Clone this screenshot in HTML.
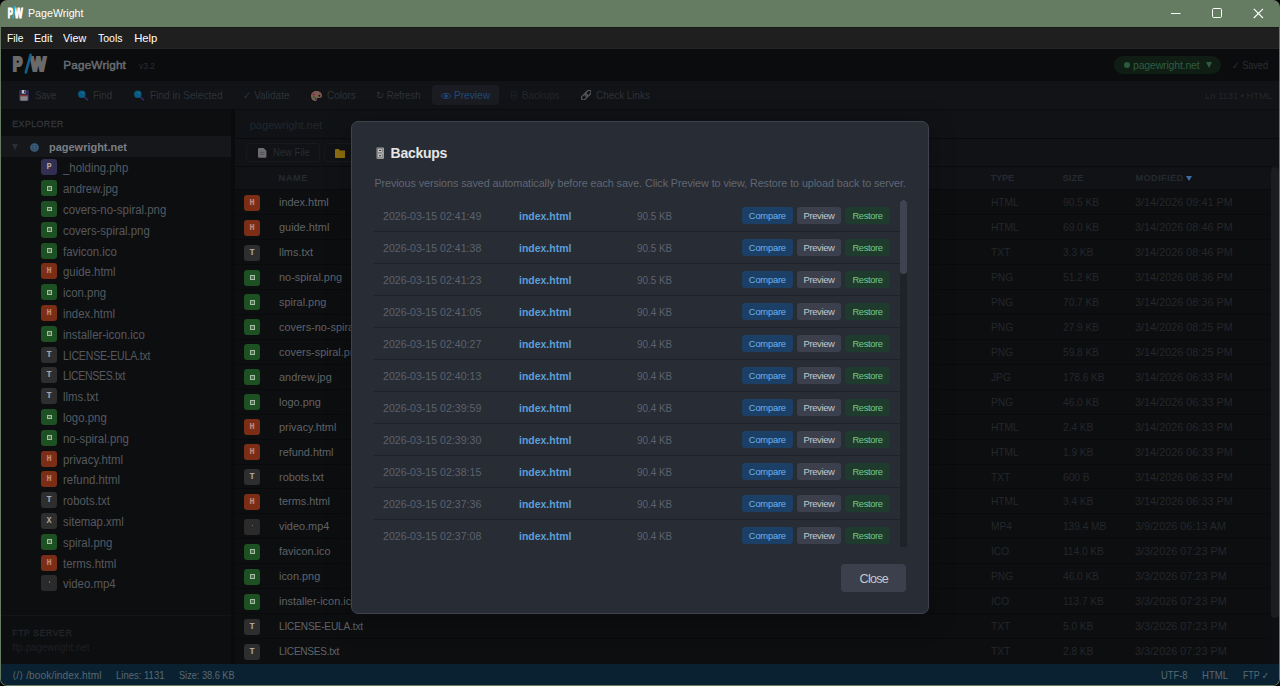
<!DOCTYPE html>
<html><head><meta charset="utf-8"><title>PageWright</title>
<style>
*{box-sizing:border-box;margin:0;padding:0}
html,body{width:1280px;height:686px;overflow:hidden;background:#000;font-family:"Liberation Sans","DejaVu Sans",sans-serif;}
body{position:relative}
span,div,b,i{white-space:nowrap}
#frame{position:absolute;left:0;top:0;width:1280px;height:686px;background:#657c62;border-radius:7px}
#title .tt{position:absolute;left:27.8px;top:0;line-height:27.5px;font-size:11.2px;color:#fff}
#win{position:absolute;left:1px;top:27px;width:1278px;height:658px;background:#0c0d0f;border-radius:0 0 6px 6px;overflow:hidden}
#menu{position:absolute;left:0;top:0;width:1278px;height:22.3px;background:#1f1f1f;box-shadow:inset 0 1px 0 #171717,inset 0 -1px 0 #242424;color:#fff;font-size:11.3px}
#menu span{position:absolute;top:0;line-height:23px}
#hdr{position:absolute;left:0;top:22px;width:1278px;height:32px;background:#0b0c0e}
#hdr .nm{position:absolute;left:62.3px;top:0;line-height:33.6px;font-size:11.8px;font-weight:normal;-webkit-text-stroke:0.45px #6a6e73;color:#6a6e73}
#hdr .ver{position:absolute;left:138px;top:0;line-height:34px;font-size:9.5px;color:#2a2d32}
#pill{position:absolute;left:1113px;top:6.5px;width:107px;height:18.5px;border-radius:10px;background:#0f1d15}
#pill .dot{position:absolute;left:9.5px;top:6.5px;width:6px;height:6px;border-radius:3px;background:#2c5a3c}
#pill .pt{position:absolute;left:19px;top:0;line-height:18.5px;font-size:10.5px;color:#2d5e3f}
#pill .ar{position:absolute;left:92px;top:6.5px;width:0;height:0;border-left:3.5px solid transparent;border-right:3.5px solid transparent;border-top:6px solid #2d5e3f}
#hdr .saved{position:absolute;left:1231px;top:0;line-height:33px;font-size:10.5px;color:#2a2d32}
#tb{position:absolute;left:0;top:54px;width:1278px;height:29px;background:#111316;box-shadow:inset 0 -1px 0 #0b0c0e}
#tb .t{position:absolute;top:0;line-height:29px;font-size:10.8px;color:#2e3237}
#tb .pv{position:absolute;left:430.6px;top:4px;width:67px;height:20px;border-radius:4px;background:#1a1c21}
#tb svg{position:absolute}
#side{position:absolute;left:0;top:83px;width:230px;height:554px;background:#0d0e10}
#side .lab{position:absolute;left:11.3px;top:7px;line-height:14px;font-size:8.8px;font-weight:normal;-webkit-text-stroke:0.3px #33363b;color:#33363b}
#side .root{position:absolute;left:0;top:26.3px;width:230px;height:20.5px;background:#15171a}
#side .root .arr{position:absolute;left:10.5px;top:7.5px;width:0;height:0;border-left:3.5px solid transparent;border-right:3.5px solid transparent;border-top:6px solid #2b2e33}
#side .root .rn{position:absolute;left:47.7px;top:0;line-height:23.6px;font-size:11.5px;font-weight:bold;color:#7b7f85}
#side .sep{position:absolute;left:0;top:505px;width:230px;height:1px;background:#131518}
#side .ftp{position:absolute;left:11.3px;top:516px;line-height:14px;font-size:8.6px;font-weight:normal;-webkit-text-stroke:0.3px #23262a;color:#23262a}
#side .ftph{position:absolute;left:11.3px;top:531px;line-height:14px;font-size:10px;color:#1d1f23}
#gap{position:absolute;left:230px;top:83px;width:4px;height:554px;background:#0a0b0c}
#main{position:absolute;left:234px;top:83px;width:1044px;height:554px;background:#0c0d0f;overflow:hidden}
#bc{position:absolute;left:0;top:0;width:1044px;height:28.5px;background:#101215;border-bottom:1px solid #090a0c}
#bc span{position:absolute;left:14.7px;top:0;line-height:30px;font-size:11.3px;color:#1f282e}
#bb{position:absolute;left:0;top:28.5px;width:1044px;height:28px;background:#101215}
#bb .btn{position:absolute;top:4px;height:19.5px;border:1px solid #17191d;border-radius:4px}
#bb .btn span{position:absolute;top:0;line-height:17.5px;font-size:10.8px;color:#292c31}
#th{position:absolute;left:0;top:56px;width:1036px;height:23.5px;background:#101215;border-top:1px solid #0a0b0d}
#th span{position:absolute;top:0;line-height:22px;font-size:9.3px;font-weight:bold;color:#252a31}
#vs{position:absolute;left:1036px;top:56.5px;width:8px;height:498px;background:#0e0f12}
#vs i{position:absolute;left:0;top:0;width:7.5px;height:451px;background:#1a1c20;border-radius:4px}
#status{position:absolute;left:0;top:637px;width:1278px;height:21px;background:#0a2131;color:#596872;font-size:10.1px}
#status span{position:absolute;top:0;line-height:24.4px}
.fi{position:absolute;width:16px;height:16px;border-radius:3px;font-family:"Liberation Mono",monospace;font-weight:bold;font-size:8.6px;line-height:16px;text-align:center;color:#a9a9a9}
.ip{background:#322f52;color:#b0aa9c}.ii{background:#1d5022}.ih{background:#7c2d15;color:#bd8e7c}.it{background:#2e2e2e;color:#a8a8a8}.id{background:#2b2b2b}
.fi .sq{position:absolute;left:5.6px;top:5.6px;width:5px;height:4.8px;border:1.2px solid #a4bba4;background:#44704a}
.fi .dot{position:absolute;left:7.5px;top:6px;width:1.5px;height:1.5px;background:#6a6a6a}
.sf{position:absolute;left:0;width:230px;height:16px}
.sf .fi{left:40px;top:0}
.sf .sn{position:absolute;left:61.6px;top:0;line-height:18.6px;font-size:12px;color:#55595f}
.mr{position:absolute;left:0;width:1036px;height:25px;border-top:1px solid #090a0c;background:#0d0e10}
.mr .fi{left:9px;top:4.5px}
.mr .mn,.mr .mt,.mr .ms,.mr .md{position:absolute;top:0;line-height:24.8px;font-size:11.6px}
.mr .mn{left:43.5px;color:#5f6368;font-size:11.5px;line-height:24.2px}
.mr .mt{left:755.5px;color:#24272c}
.mr .ms{left:827.5px;color:#24272c}
.mr .md{left:900px;color:#24272c}
#modal{position:absolute;left:351px;top:121px;width:578px;height:493px;background:#282c34;border:1px solid #3d424e;border-radius:7px;box-shadow:0 6px 28px rgba(0,0,0,.3)}
#modal h2{position:absolute;left:38.6px;top:20px;line-height:22px;font-size:14px;color:#e6e6e6;font-weight:bold}
#modal .desc{position:absolute;left:22.4px;top:53px;line-height:16px;font-size:10.8px;color:#606774}
#list{position:absolute;left:22px;top:77.5px;width:525.5px;height:347px;overflow:hidden}
#sb{position:absolute;left:547.5px;top:77.5px;width:7px;height:347px;background:#1f2228}
#sb i{position:absolute;left:0;top:0;width:7px;height:74.5px;border-radius:3.5px;background:#3e4350}
.br{position:absolute;left:0;width:525.5px;height:32px;border-bottom:1px solid #1e2127}
.br span{position:absolute}
.bd,.bf,.bs{top:0;line-height:32.5px;font-size:11.2px}
.bd{left:9.1px;color:#5c626e}
.bf{left:144.8px;color:#5b9fd9;font-weight:bold}
.bs{left:263px;color:#5c626e}
.bb{top:7px;height:17px;border-radius:3px;font-size:9.4px;line-height:17px;text-align:center}
.bb b{font-weight:normal}
.bc{left:367.7px;width:51.3px;background:#1c3f66;color:#6fb1ea}
.bp{left:423px;width:44px;background:#3b404c;color:#c5c8cf}
.bx{left:471px;width:45px;background:#1f3b2d;color:#73c98a}
#close{position:absolute;left:489.2px;top:441.8px;width:65.2px;height:28px;background:#3b404c;border-radius:4px;color:#c5c8d0;font-size:12.6px;line-height:30px;text-align:center}
</style></head><body>
<div id="frame"></div>
<div id="title">
 <svg style="position:absolute;left:7px;top:5px" width="18" height="15" viewBox="0 0 18 15"><g font-family="Liberation Sans, sans-serif" font-weight="bold" font-size="14.5" fill="#fff" stroke="#fff" stroke-width="1.1"><text transform="translate(0.7,12.6) scale(0.55,1)">P</text><text transform="translate(7.6,12.6) scale(0.6,1)">W</text></g><line x1="8.2" y1="1" x2="5.8" y2="13.5" stroke="#1fb0f0" stroke-width="1.4"/></svg>
 <span class="tt" style="transform:scaleX(0.9528);transform-origin:0 50%">PageWright</span>
 <svg style="position:absolute;left:1165px;top:5px" width="110" height="18" viewBox="0 0 110 18" fill="none" stroke="#fff" stroke-width="1"><path d="M6 8.5h9.5"/><rect x="47.5" y="3.5" width="9" height="9" rx="1.2"/><path d="M88.8 3.8l9.2 9.2M98 3.8l-9.2 9.2" stroke-width="1.1"/></svg>
</div>
<div id="win">
 <div id="menu"><span style="transform:scaleX(0.9064);transform-origin:0 50%;left:5.5px">File</span><span style="transform:scaleX(0.9451);transform-origin:0 50%;left:32.6px">Edit</span><span style="transform:scaleX(0.9549);transform-origin:0 50%;left:62.3px">View</span><span style="transform:scaleX(0.9289);transform-origin:0 50%;left:97px">Tools</span><span style="letter-spacing:-0.059px;left:133.2px">Help</span></div>
 <div id="hdr">
  <svg style="position:absolute;left:10px;top:3.7px" width="40" height="22" viewBox="0 0 40 22"><g font-family="Liberation Sans, sans-serif" font-weight="bold" font-size="19.6" fill="#6a6a6a" stroke="#6a6a6a" stroke-width="2.2" stroke-linejoin="miter"><text transform="translate(1.7,18.3) scale(0.74,1)">P</text><text transform="translate(19.6,18.3) scale(0.84,1)">W</text></g><line x1="19.6" y1="1.8" x2="14.8" y2="19.4" stroke="#14608a" stroke-width="2.6" stroke-linecap="round"/></svg>
  <span class="nm" style="letter-spacing:0.128px">PageWright</span><span class="ver" style="transform:scaleX(0.8904);transform-origin:0 50%">v3.2</span>
  <div id="pill"><i class="dot"></i><span class="pt" style="letter-spacing:-0.171px">pagewright.net</span><i class="ar"></i></div>
  <span class="saved" style="letter-spacing:-0.084px;transform:scaleX(0.8800);transform-origin:0 50%">✓ Saved</span>
 </div>
 <div id="tb">
  <div class="pv"></div>
  <svg style="left:18.3px;top:8.9px" width="10" height="10.7" viewBox="0 0 10 10.7"><rect width="10" height="10.7" rx="1.2" fill="#2e2a52"/><rect x="2.8" y="0" width="3.6" height="3.6" fill="#bfc0c6"/><rect x="5" y="0.5" width="1" height="2.4" fill="#2e2a52"/><rect x="1.3" y="5.1" width="7.4" height="5.6" fill="#858587"/><rect x="1.3" y="5.1" width="7.4" height="1.2" fill="#8a2a20"/></svg>
  <svg style="left:76px;top:8px" width="13" height="13" viewBox="0 0 13 13"><line x1="7.5" y1="8" x2="10.2" y2="10.7" stroke="#30295a" stroke-width="1.9" stroke-linecap="round"/><circle cx="4.8" cy="5.3" r="3.7" fill="#0b5a82"/><circle cx="5.9" cy="3.7" r="0.7" fill="#2f7aa0"/></svg>
  <svg style="left:132.2px;top:8px" width="13" height="13" viewBox="0 0 13 13"><line x1="7.5" y1="8" x2="10.2" y2="10.7" stroke="#30295a" stroke-width="1.9" stroke-linecap="round"/><circle cx="4.8" cy="5.3" r="3.7" fill="#0b5a82"/><circle cx="5.9" cy="3.7" r="0.7" fill="#2f7aa0"/></svg>
  <svg style="left:309.9px;top:9.6px" width="11" height="10" viewBox="0 0 11 10"><path d="M5.2 0C2.2 0 0 2.2 0 5.2 0 8 2 10 4.6 10c1 0 1.4-.6 1.2-1.4-.2-.9.3-1.5 1.3-1.5h1.6C10.2 7.1 11 6 11 4.6 11 2 8.5 0 5.2 0z" fill="#7f5d4b"/><circle cx="2.6" cy="3.4" r="1" fill="#a0105a"/><circle cx="2.8" cy="6" r="1" fill="#0a7a2a"/><circle cx="4.6" cy="7.7" r="0.9" fill="#2030a0"/><circle cx="4.8" cy="2.1" r="0.9" fill="#6a50a0"/><circle cx="8.4" cy="4.7" r="1" fill="#111316"/></svg>
  <svg style="left:440.1px;top:11.5px" width="10" height="6" viewBox="0 0 10 6"><ellipse cx="5" cy="3" rx="4.5" ry="2.4" fill="none" stroke="#1f4878" stroke-width="1"/><ellipse cx="5" cy="3" rx="2" ry="1.5" fill="#1f4878"/></svg>
  <svg style="left:510px;top:9.9px" width="6" height="8.7" viewBox="0 0 6 8.7" fill="none" stroke="#1d2024" stroke-width="0.9"><rect x="0.5" y="0.5" width="5" height="7.7" rx="0.6"/><path d="M0.5 4.3h5M2.2 2.4h1.6M2.2 6.2h1.6"/></svg>
  <svg style="left:579.6px;top:9px" width="10.6" height="10.2" viewBox="0 0 10.6 10.2" fill="none" stroke="#585858" stroke-width="1.3"><g transform="translate(5.3,5.1) rotate(-45)"><rect x="-6" y="-2.1" width="7" height="4.2" rx="2.1"/><rect x="-1" y="-2.1" width="7" height="4.2" rx="2.1"/></g></svg>
  <span class="t" style="letter-spacing:-0.186px;transform:scaleX(0.8800);transform-origin:0 50%;left:34px">Save</span>
  <span class="t" style="transform:scaleX(0.9136);transform-origin:0 50%;left:92.4px">Find</span>
  <span class="t" style="transform:scaleX(0.9375);transform-origin:0 50%;left:148.6px">Find in Selected</span>
  <span class="t" style="transform:scaleX(0.9251);transform-origin:0 50%;left:241.7px">✓ Validate</span>
  <span class="t" style="transform:scaleX(0.9230);transform-origin:0 50%;left:326px">Colors</span>
  <span class="t" style="transform:scaleX(0.8945);transform-origin:0 50%;left:375px">↻ Refresh</span>
  <span class="t" style="transform:scaleX(0.9373);transform-origin:0 50%;left:453.3px;color:#1f4a78">Preview</span>
  <span class="t" style="transform:scaleX(0.9053);transform-origin:0 50%;left:521px;color:#23262b">Backups</span>
  <span class="t" style="transform:scaleX(0.9182);transform-origin:0 50%;left:595px">Check Links</span>
  <span class="t" style="transform:scaleX(0.9539);transform-origin:0 50%;left:1204px;color:#24272c;font-size:9.8px">Ln 1131 • HTML</span>
 </div>
 <div id="side">
  <span class="lab" style="letter-spacing:0.447px">EXPLORER</span>
  <div class="root"><i class="arr"></i><svg style="position:absolute;left:29px;top:6.5px" width="9" height="9" viewBox="0 0 9 9"><circle cx="4.5" cy="4.5" r="4.3" fill="#3f6585"/><path d="M0.5 4.5h8M1.2 2.6h6.6M1.2 6.4h6.6" stroke="#2a4660" stroke-width="0.7" fill="none"/><ellipse cx="4.5" cy="4.5" rx="2" ry="4.2" fill="none" stroke="#2a4660" stroke-width="0.7"/></svg><span class="rn" style="transform:scaleX(0.9538);transform-origin:0 50%">pagewright.net</span></div>
<div class="sf" style="top:49.4px"><span class="fi ip">P</span><span class="sn" style="transform:scaleX(0.9500);transform-origin:0 50%">_holding.php</span></div>
<div class="sf" style="top:70.2px"><span class="fi ii"><i class="sq"></i></span><span class="sn" style="transform:scaleX(0.9500);transform-origin:0 50%">andrew.jpg</span></div>
<div class="sf" style="top:91.0px"><span class="fi ii"><i class="sq"></i></span><span class="sn" style="transform:scaleX(0.9500);transform-origin:0 50%">covers-no-spiral.png</span></div>
<div class="sf" style="top:111.8px"><span class="fi ii"><i class="sq"></i></span><span class="sn" style="transform:scaleX(0.9500);transform-origin:0 50%">covers-spiral.png</span></div>
<div class="sf" style="top:132.6px"><span class="fi ii"><i class="sq"></i></span><span class="sn" style="transform:scaleX(0.9500);transform-origin:0 50%">favicon.ico</span></div>
<div class="sf" style="top:153.4px"><span class="fi ih">H</span><span class="sn" style="transform:scaleX(0.9500);transform-origin:0 50%">guide.html</span></div>
<div class="sf" style="top:174.2px"><span class="fi ii"><i class="sq"></i></span><span class="sn" style="transform:scaleX(0.9500);transform-origin:0 50%">icon.png</span></div>
<div class="sf" style="top:195.0px"><span class="fi ih">H</span><span class="sn" style="transform:scaleX(0.9500);transform-origin:0 50%">index.html</span></div>
<div class="sf" style="top:215.8px"><span class="fi ii"><i class="sq"></i></span><span class="sn" style="transform:scaleX(0.9500);transform-origin:0 50%">installer-icon.ico</span></div>
<div class="sf" style="top:236.6px"><span class="fi it">T</span><span class="sn" style="letter-spacing:-0.219px;transform:scaleX(0.8800);transform-origin:0 50%">LICENSE-EULA.txt</span></div>
<div class="sf" style="top:257.4px"><span class="fi it">T</span><span class="sn" style="letter-spacing:-0.409px;transform:scaleX(0.8800);transform-origin:0 50%">LICENSES.txt</span></div>
<div class="sf" style="top:278.2px"><span class="fi it">T</span><span class="sn" style="transform:scaleX(0.9500);transform-origin:0 50%">llms.txt</span></div>
<div class="sf" style="top:299.0px"><span class="fi ii"><i class="sq"></i></span><span class="sn" style="transform:scaleX(0.9500);transform-origin:0 50%">logo.png</span></div>
<div class="sf" style="top:319.8px"><span class="fi ii"><i class="sq"></i></span><span class="sn" style="transform:scaleX(0.9500);transform-origin:0 50%">no-spiral.png</span></div>
<div class="sf" style="top:340.6px"><span class="fi ih">H</span><span class="sn" style="transform:scaleX(0.9500);transform-origin:0 50%">privacy.html</span></div>
<div class="sf" style="top:361.4px"><span class="fi ih">H</span><span class="sn" style="transform:scaleX(0.9500);transform-origin:0 50%">refund.html</span></div>
<div class="sf" style="top:382.2px"><span class="fi it">T</span><span class="sn" style="transform:scaleX(0.9500);transform-origin:0 50%">robots.txt</span></div>
<div class="sf" style="top:403.0px"><span class="fi it">X</span><span class="sn" style="transform:scaleX(0.9500);transform-origin:0 50%">sitemap.xml</span></div>
<div class="sf" style="top:423.8px"><span class="fi ii"><i class="sq"></i></span><span class="sn" style="transform:scaleX(0.9500);transform-origin:0 50%">spiral.png</span></div>
<div class="sf" style="top:444.6px"><span class="fi ih">H</span><span class="sn" style="transform:scaleX(0.9500);transform-origin:0 50%">terms.html</span></div>
<div class="sf" style="top:465.4px"><span class="fi id"><i class="dot"></i></span><span class="sn" style="transform:scaleX(0.9500);transform-origin:0 50%">video.mp4</span></div>
  <div class="sep"></div>
  <span class="ftp" style="letter-spacing:0.634px">FTP SERVER</span>
  <span class="ftph" style="letter-spacing:-0.139px">ftp.pagewright.net</span>
 </div>
 <div id="gap"></div>
 <div id="main">
  <div id="bc"><span style="letter-spacing:-0.136px">pagewright.net</span></div>
  <div id="bb">
   <div class="btn" style="left:11.4px;width:73.4px"><svg style="position:absolute;left:10.9px;top:4.6px" width="8.4" height="9.7" viewBox="0 0 8.4 9.7"><path d="M1 0h4.6l2.8 2.8V8.7a1 1 0 0 1-1 1H1a1 1 0 0 1-1-1V1a1 1 0 0 1 1-1z" fill="#6e6c70"/><path d="M1.8 4.4h4.6M1.8 6.4h4.6" stroke="#504e52" stroke-width="0.8"/></svg><span style="letter-spacing:-0.023px;transform:scaleX(0.8800);transform-origin:0 50%;left:25.4px">New File</span></div>
   <div class="btn" style="left:88.9px;width:90px"><svg style="position:absolute;left:9.8px;top:5.3px" width="10.3" height="9" viewBox="0 0 10.3 9"><path d="M0 1a1 1 0 0 1 1-1h2.8l1.2 1.4h4.3a1 1 0 0 1 1 1V8a1 1 0 0 1-1 1H1a1 1 0 0 1-1-1z" fill="#8f6f10"/></svg></div>
  </div>
  <div id="th"><span style="letter-spacing:0.531px;left:43.5px">NAME</span><span style="letter-spacing:-0.199px;left:755.5px">TYPE</span><span style="letter-spacing:0.082px;left:827.5px">SIZE</span><span style="letter-spacing:0.318px;left:900.5px">MODIFIED</span><i style="position:absolute;left:951px;top:8.5px;width:0;height:0;border-left:3.6px solid transparent;border-right:3.6px solid transparent;border-top:5px solid #3a6ea5"></i></div>
<div class="mr" style="top:79.20px"><span class="fi ih">H</span><span class="mn" style="transform:scaleX(0.9480);transform-origin:0 50%">index.html</span><span class="mt" style="letter-spacing:-0.018px;transform:scaleX(0.8800);transform-origin:0 50%">HTML</span><span class="ms" style="letter-spacing:-0.054px;transform:scaleX(0.8800);transform-origin:0 50%">90.5 KB</span><span class="md" style="transform:scaleX(0.9360);transform-origin:0 50%">3/14/2026 09:41 PM</span></div>
<div class="mr" style="top:104.14px"><span class="fi ih">H</span><span class="mn" style="transform:scaleX(0.9480);transform-origin:0 50%">guide.html</span><span class="mt" style="letter-spacing:-0.018px;transform:scaleX(0.8800);transform-origin:0 50%">HTML</span><span class="ms" style="letter-spacing:-0.054px;transform:scaleX(0.8800);transform-origin:0 50%">69.0 KB</span><span class="md" style="transform:scaleX(0.9360);transform-origin:0 50%">3/14/2026 08:46 PM</span></div>
<div class="mr" style="top:129.08px"><span class="fi it">T</span><span class="mn" style="transform:scaleX(0.9480);transform-origin:0 50%">llms.txt</span><span class="mt" style="letter-spacing:-0.017px;transform:scaleX(0.8800);transform-origin:0 50%">TXT</span><span class="ms" style="letter-spacing:-0.053px;transform:scaleX(0.8800);transform-origin:0 50%">3.3 KB</span><span class="md" style="transform:scaleX(0.9360);transform-origin:0 50%">3/14/2026 08:46 PM</span></div>
<div class="mr" style="top:154.02px"><span class="fi ii"><i class="sq"></i></span><span class="mn" style="transform:scaleX(0.9480);transform-origin:0 50%">no-spiral.png</span><span class="mt" style="letter-spacing:-0.019px;transform:scaleX(0.8800);transform-origin:0 50%">PNG</span><span class="ms" style="letter-spacing:-0.054px;transform:scaleX(0.8800);transform-origin:0 50%">51.2 KB</span><span class="md" style="transform:scaleX(0.9360);transform-origin:0 50%">3/14/2026 08:36 PM</span></div>
<div class="mr" style="top:178.96px"><span class="fi ii"><i class="sq"></i></span><span class="mn" style="transform:scaleX(0.9480);transform-origin:0 50%">spiral.png</span><span class="mt" style="letter-spacing:-0.019px;transform:scaleX(0.8800);transform-origin:0 50%">PNG</span><span class="ms" style="letter-spacing:-0.054px;transform:scaleX(0.8800);transform-origin:0 50%">70.7 KB</span><span class="md" style="transform:scaleX(0.9360);transform-origin:0 50%">3/14/2026 08:36 PM</span></div>
<div class="mr" style="top:203.90px"><span class="fi ii"><i class="sq"></i></span><span class="mn" style="transform:scaleX(0.9480);transform-origin:0 50%">covers-no-spiral.png</span><span class="mt" style="letter-spacing:-0.019px;transform:scaleX(0.8800);transform-origin:0 50%">PNG</span><span class="ms" style="letter-spacing:-0.054px;transform:scaleX(0.8800);transform-origin:0 50%">27.9 KB</span><span class="md" style="transform:scaleX(0.9360);transform-origin:0 50%">3/14/2026 08:25 PM</span></div>
<div class="mr" style="top:228.84px"><span class="fi ii"><i class="sq"></i></span><span class="mn" style="transform:scaleX(0.9480);transform-origin:0 50%">covers-spiral.png</span><span class="mt" style="letter-spacing:-0.019px;transform:scaleX(0.8800);transform-origin:0 50%">PNG</span><span class="ms" style="letter-spacing:-0.054px;transform:scaleX(0.8800);transform-origin:0 50%">59.8 KB</span><span class="md" style="transform:scaleX(0.9360);transform-origin:0 50%">3/14/2026 08:25 PM</span></div>
<div class="mr" style="top:253.78px"><span class="fi ii"><i class="sq"></i></span><span class="mn" style="transform:scaleX(0.9480);transform-origin:0 50%">andrew.jpg</span><span class="mt" style="letter-spacing:-0.017px;transform:scaleX(0.8800);transform-origin:0 50%">JPG</span><span class="ms" style="letter-spacing:-0.054px;transform:scaleX(0.8800);transform-origin:0 50%">178.6 KB</span><span class="md" style="transform:scaleX(0.9360);transform-origin:0 50%">3/14/2026 06:33 PM</span></div>
<div class="mr" style="top:278.72px"><span class="fi ii"><i class="sq"></i></span><span class="mn" style="transform:scaleX(0.9480);transform-origin:0 50%">logo.png</span><span class="mt" style="letter-spacing:-0.019px;transform:scaleX(0.8800);transform-origin:0 50%">PNG</span><span class="ms" style="letter-spacing:-0.054px;transform:scaleX(0.8800);transform-origin:0 50%">46.0 KB</span><span class="md" style="transform:scaleX(0.9360);transform-origin:0 50%">3/14/2026 06:33 PM</span></div>
<div class="mr" style="top:303.66px"><span class="fi ih">H</span><span class="mn" style="transform:scaleX(0.9480);transform-origin:0 50%">privacy.html</span><span class="mt" style="letter-spacing:-0.018px;transform:scaleX(0.8800);transform-origin:0 50%">HTML</span><span class="ms" style="letter-spacing:-0.053px;transform:scaleX(0.8800);transform-origin:0 50%">2.4 KB</span><span class="md" style="transform:scaleX(0.9360);transform-origin:0 50%">3/14/2026 06:33 PM</span></div>
<div class="mr" style="top:328.60px"><span class="fi ih">H</span><span class="mn" style="transform:scaleX(0.9480);transform-origin:0 50%">refund.html</span><span class="mt" style="letter-spacing:-0.018px;transform:scaleX(0.8800);transform-origin:0 50%">HTML</span><span class="ms" style="letter-spacing:-0.053px;transform:scaleX(0.8800);transform-origin:0 50%">1.9 KB</span><span class="md" style="transform:scaleX(0.9360);transform-origin:0 50%">3/14/2026 06:33 PM</span></div>
<div class="mr" style="top:353.54px"><span class="fi it">T</span><span class="mn" style="transform:scaleX(0.9480);transform-origin:0 50%">robots.txt</span><span class="mt" style="letter-spacing:-0.017px;transform:scaleX(0.8800);transform-origin:0 50%">TXT</span><span class="ms" style="letter-spacing:-0.055px;transform:scaleX(0.8800);transform-origin:0 50%">600 B</span><span class="md" style="transform:scaleX(0.9360);transform-origin:0 50%">3/14/2026 06:33 PM</span></div>
<div class="mr" style="top:378.48px"><span class="fi ih">H</span><span class="mn" style="transform:scaleX(0.9480);transform-origin:0 50%">terms.html</span><span class="mt" style="letter-spacing:-0.018px;transform:scaleX(0.8800);transform-origin:0 50%">HTML</span><span class="ms" style="letter-spacing:-0.053px;transform:scaleX(0.8800);transform-origin:0 50%">3.4 KB</span><span class="md" style="transform:scaleX(0.9360);transform-origin:0 50%">3/14/2026 06:33 PM</span></div>
<div class="mr" style="top:403.42px"><span class="fi id"><i class="dot"></i></span><span class="mn" style="transform:scaleX(0.9480);transform-origin:0 50%">video.mp4</span><span class="mt" style="letter-spacing:-0.018px;transform:scaleX(0.8800);transform-origin:0 50%">MP4</span><span class="ms" style="letter-spacing:-0.056px;transform:scaleX(0.8800);transform-origin:0 50%">139.4 MB</span><span class="md" style="transform:scaleX(0.9360);transform-origin:0 50%">3/9/2026 06:13 AM</span></div>
<div class="mr" style="top:428.36px"><span class="fi ii"><i class="sq"></i></span><span class="mn" style="transform:scaleX(0.9480);transform-origin:0 50%">favicon.ico</span><span class="mt" style="letter-spacing:-0.016px;transform:scaleX(0.8800);transform-origin:0 50%">ICO</span><span class="ms" style="letter-spacing:-0.053px;transform:scaleX(0.8800);transform-origin:0 50%">114.0 KB</span><span class="md" style="transform:scaleX(0.9360);transform-origin:0 50%">3/3/2026 07:23 PM</span></div>
<div class="mr" style="top:453.30px"><span class="fi ii"><i class="sq"></i></span><span class="mn" style="transform:scaleX(0.9480);transform-origin:0 50%">icon.png</span><span class="mt" style="letter-spacing:-0.019px;transform:scaleX(0.8800);transform-origin:0 50%">PNG</span><span class="ms" style="letter-spacing:-0.054px;transform:scaleX(0.8800);transform-origin:0 50%">46.0 KB</span><span class="md" style="transform:scaleX(0.9360);transform-origin:0 50%">3/3/2026 07:23 PM</span></div>
<div class="mr" style="top:478.24px"><span class="fi ii"><i class="sq"></i></span><span class="mn" style="transform:scaleX(0.9480);transform-origin:0 50%">installer-icon.ico</span><span class="mt" style="letter-spacing:-0.016px;transform:scaleX(0.8800);transform-origin:0 50%">ICO</span><span class="ms" style="letter-spacing:-0.053px;transform:scaleX(0.8800);transform-origin:0 50%">113.7 KB</span><span class="md" style="transform:scaleX(0.9360);transform-origin:0 50%">3/3/2026 07:23 PM</span></div>
<div class="mr" style="top:503.18px"><span class="fi it">T</span><span class="mn" style="letter-spacing:-0.185px;transform:scaleX(0.8800);transform-origin:0 50%">LICENSE-EULA.txt</span><span class="mt" style="letter-spacing:-0.017px;transform:scaleX(0.8800);transform-origin:0 50%">TXT</span><span class="ms" style="letter-spacing:-0.053px;transform:scaleX(0.8800);transform-origin:0 50%">5.0 KB</span><span class="md" style="transform:scaleX(0.9360);transform-origin:0 50%">3/3/2026 07:23 PM</span></div>
<div class="mr" style="top:528.12px"><span class="fi it">T</span><span class="mn" style="letter-spacing:-0.327px;transform:scaleX(0.8800);transform-origin:0 50%">LICENSES.txt</span><span class="mt" style="letter-spacing:-0.017px;transform:scaleX(0.8800);transform-origin:0 50%">TXT</span><span class="ms" style="letter-spacing:-0.053px;transform:scaleX(0.8800);transform-origin:0 50%">2.8 KB</span><span class="md" style="transform:scaleX(0.9360);transform-origin:0 50%">3/3/2026 07:23 PM</span></div>
  <div id="vs"><i></i></div>
 </div>
 <div id="status"><span style="letter-spacing:0.125px;left:11.2px">⟨/⟩ /book/index.html</span><span style="transform:scaleX(0.9426);transform-origin:0 50%;left:115.2px">Lines: 1131</span><span style="transform:scaleX(0.9073);transform-origin:0 50%;left:178.2px">Size: 38.6 KB</span><span style="transform:scaleX(0.9263);transform-origin:0 50%;left:1160.4px">UTF-8</span><span style="transform:scaleX(0.9460);transform-origin:0 50%;left:1201px">HTML</span><span style="letter-spacing:-0.122px;transform:scaleX(0.8800);transform-origin:0 50%;left:1241.6px">FTP ✓</span></div>
</div>
<div id="modal">
 <svg style="position:absolute;left:23.7px;top:24.7px" width="8.3" height="12.3" viewBox="0 0 8.3 12.3"><rect x="0.3" y="0.3" width="7.7" height="11.7" rx="0.8" fill="#d9d9d9" stroke="#15171b" stroke-width="0.6"/><rect x="1.6" y="1.5" width="5.1" height="4" fill="#c2c2c2" stroke="#5a5a5a" stroke-width="0.6"/><rect x="1.6" y="6.8" width="5.1" height="4" fill="#c2c2c2" stroke="#5a5a5a" stroke-width="0.6"/><rect x="3" y="2.9" width="2.3" height="1.1" fill="#3a3a3a"/><rect x="3" y="8.2" width="2.3" height="1.1" fill="#3a3a3a"/></svg>
 <h2 style="letter-spacing:-0.266px">Backups</h2>
 <div class="desc"><span style="letter-spacing:-0.077px">Previous versions saved automatically before each save. Click Preview to view, Restore to upload back to server.</span></div>
 <div id="list">
<div class="br" style="top:0px"><span class="bd" style="transform:scaleX(0.9462);transform-origin:0 50%">2026-03-15 02:41:49</span><span class="bf" style="transform:scaleX(0.9365);transform-origin:0 50%">index.html</span><span class="bs" style="transform:scaleX(0.8841);transform-origin:0 50%">90.5 KB</span><span class="bb bc"><b style="letter-spacing:-0.223px">Compare</b></span><span class="bb bp"><b style="letter-spacing:-0.335px">Preview</b></span><span class="bb bx"><b style="letter-spacing:-0.404px">Restore</b></span></div>
<div class="br" style="top:32px"><span class="bd" style="transform:scaleX(0.9462);transform-origin:0 50%">2026-03-15 02:41:38</span><span class="bf" style="transform:scaleX(0.9365);transform-origin:0 50%">index.html</span><span class="bs" style="transform:scaleX(0.8841);transform-origin:0 50%">90.5 KB</span><span class="bb bc"><b style="letter-spacing:-0.223px">Compare</b></span><span class="bb bp"><b style="letter-spacing:-0.335px">Preview</b></span><span class="bb bx"><b style="letter-spacing:-0.404px">Restore</b></span></div>
<div class="br" style="top:64px"><span class="bd" style="transform:scaleX(0.9462);transform-origin:0 50%">2026-03-15 02:41:23</span><span class="bf" style="transform:scaleX(0.9365);transform-origin:0 50%">index.html</span><span class="bs" style="transform:scaleX(0.8841);transform-origin:0 50%">90.5 KB</span><span class="bb bc"><b style="letter-spacing:-0.223px">Compare</b></span><span class="bb bp"><b style="letter-spacing:-0.335px">Preview</b></span><span class="bb bx"><b style="letter-spacing:-0.404px">Restore</b></span></div>
<div class="br" style="top:96px"><span class="bd" style="transform:scaleX(0.9462);transform-origin:0 50%">2026-03-15 02:41:05</span><span class="bf" style="transform:scaleX(0.9365);transform-origin:0 50%">index.html</span><span class="bs" style="transform:scaleX(0.8841);transform-origin:0 50%">90.4 KB</span><span class="bb bc"><b style="letter-spacing:-0.223px">Compare</b></span><span class="bb bp"><b style="letter-spacing:-0.335px">Preview</b></span><span class="bb bx"><b style="letter-spacing:-0.404px">Restore</b></span></div>
<div class="br" style="top:128px"><span class="bd" style="transform:scaleX(0.9462);transform-origin:0 50%">2026-03-15 02:40:27</span><span class="bf" style="transform:scaleX(0.9365);transform-origin:0 50%">index.html</span><span class="bs" style="transform:scaleX(0.8841);transform-origin:0 50%">90.4 KB</span><span class="bb bc"><b style="letter-spacing:-0.223px">Compare</b></span><span class="bb bp"><b style="letter-spacing:-0.335px">Preview</b></span><span class="bb bx"><b style="letter-spacing:-0.404px">Restore</b></span></div>
<div class="br" style="top:160px"><span class="bd" style="transform:scaleX(0.9462);transform-origin:0 50%">2026-03-15 02:40:13</span><span class="bf" style="transform:scaleX(0.9365);transform-origin:0 50%">index.html</span><span class="bs" style="transform:scaleX(0.8841);transform-origin:0 50%">90.4 KB</span><span class="bb bc"><b style="letter-spacing:-0.223px">Compare</b></span><span class="bb bp"><b style="letter-spacing:-0.335px">Preview</b></span><span class="bb bx"><b style="letter-spacing:-0.404px">Restore</b></span></div>
<div class="br" style="top:192px"><span class="bd" style="transform:scaleX(0.9462);transform-origin:0 50%">2026-03-15 02:39:59</span><span class="bf" style="transform:scaleX(0.9365);transform-origin:0 50%">index.html</span><span class="bs" style="transform:scaleX(0.8841);transform-origin:0 50%">90.4 KB</span><span class="bb bc"><b style="letter-spacing:-0.223px">Compare</b></span><span class="bb bp"><b style="letter-spacing:-0.335px">Preview</b></span><span class="bb bx"><b style="letter-spacing:-0.404px">Restore</b></span></div>
<div class="br" style="top:224px"><span class="bd" style="transform:scaleX(0.9462);transform-origin:0 50%">2026-03-15 02:39:30</span><span class="bf" style="transform:scaleX(0.9365);transform-origin:0 50%">index.html</span><span class="bs" style="transform:scaleX(0.8841);transform-origin:0 50%">90.4 KB</span><span class="bb bc"><b style="letter-spacing:-0.223px">Compare</b></span><span class="bb bp"><b style="letter-spacing:-0.335px">Preview</b></span><span class="bb bx"><b style="letter-spacing:-0.404px">Restore</b></span></div>
<div class="br" style="top:256px"><span class="bd" style="transform:scaleX(0.9462);transform-origin:0 50%">2026-03-15 02:38:15</span><span class="bf" style="transform:scaleX(0.9365);transform-origin:0 50%">index.html</span><span class="bs" style="transform:scaleX(0.8841);transform-origin:0 50%">90.4 KB</span><span class="bb bc"><b style="letter-spacing:-0.223px">Compare</b></span><span class="bb bp"><b style="letter-spacing:-0.335px">Preview</b></span><span class="bb bx"><b style="letter-spacing:-0.404px">Restore</b></span></div>
<div class="br" style="top:288px"><span class="bd" style="transform:scaleX(0.9462);transform-origin:0 50%">2026-03-15 02:37:36</span><span class="bf" style="transform:scaleX(0.9365);transform-origin:0 50%">index.html</span><span class="bs" style="transform:scaleX(0.8841);transform-origin:0 50%">90.4 KB</span><span class="bb bc"><b style="letter-spacing:-0.223px">Compare</b></span><span class="bb bp"><b style="letter-spacing:-0.335px">Preview</b></span><span class="bb bx"><b style="letter-spacing:-0.404px">Restore</b></span></div>
<div class="br" style="top:320px"><span class="bd" style="transform:scaleX(0.9462);transform-origin:0 50%">2026-03-15 02:37:08</span><span class="bf" style="transform:scaleX(0.9365);transform-origin:0 50%">index.html</span><span class="bs" style="transform:scaleX(0.8841);transform-origin:0 50%">90.4 KB</span><span class="bb bc"><b style="letter-spacing:-0.223px">Compare</b></span><span class="bb bp"><b style="letter-spacing:-0.335px">Preview</b></span><span class="bb bx"><b style="letter-spacing:-0.404px">Restore</b></span></div>
 </div>
 <div id="sb"><i></i></div>
 <div id="close"><span style="letter-spacing:-0.741px">Close</span></div>
</div>
</body></html>
